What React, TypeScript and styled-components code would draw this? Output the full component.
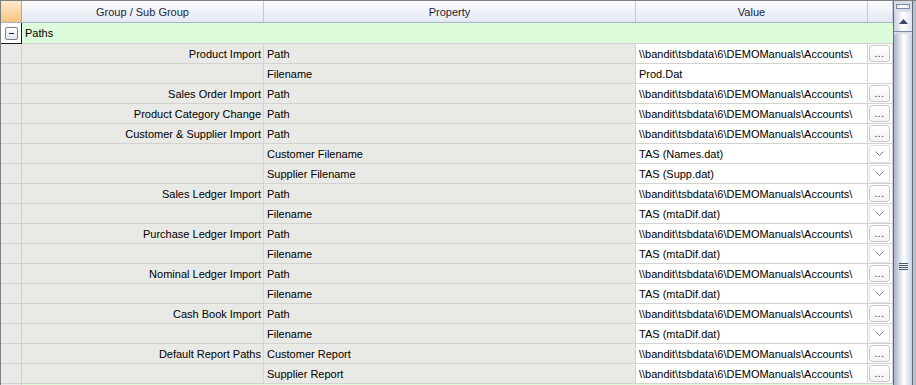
import React from 'react';
import styled, { createGlobalStyle } from 'styled-components';

const GlobalStyle = createGlobalStyle`
  html, body {
    margin: 0;
    padding: 0;
    overflow: hidden;
    background: #ffffff;
  }
  body {
    font-family: "Liberation Sans", Arial, sans-serif;
    font-size: 11px;
    color: #000;
  }
`;

const COLS = '21px 242px 372px 232px 25px';

const Frame = styled.div`
  width: 916px;
  height: 385px;
  box-sizing: border-box;
  border-top: 1px solid #7f7f7f;
  border-left: 1px solid #7f7f7f;
  display: flex;
  flex-direction: row;
  overflow: hidden;
`;

const Grid = styled.div`
  width: 892px;
  display: flex;
  flex-direction: column;
  overflow: hidden;
`;

const HeaderRow = styled.div`
  display: grid;
  grid-template-columns: ${COLS};
  height: 22px;
  flex-shrink: 0;
  box-sizing: border-box;
  border-bottom: 1px solid #a6b2c8;
`;

const Corner = styled.div`
  background: linear-gradient(#fdebd0, #f6c47e);
  border-right: 1px solid #e0a050;
`;

const HeadCell = styled.div`
  background: linear-gradient(#fbfcfe, #e3e8f1);
  border-right: 1px solid #c3cbdb;
  display: flex;
  align-items: center;
  justify-content: center;
  color: #1d1d3a;
  font-size: 11px;
`;

const Row = styled.div<{ $first?: boolean; $green?: boolean }>`
  display: grid;
  grid-template-columns: ${COLS};
  height: ${(p) => (p.$first ? '21px' : '20px')};
  flex-shrink: 0;
  box-sizing: border-box;
  border-bottom: 1px solid #d2d2d0;
  background: ${(p) => (p.$green ? '#ddfcdc' : '#e9e9e5')};
`;

const Indicator = styled.div<{ $focus?: boolean }>`
  box-sizing: border-box;
  border-right: 1px solid ${(p) => (p.$focus ? '#1a1a1a' : '#d2d2d0')};
  ${(p) => p.$focus && 'box-shadow: 0 1px 0 #1a1a1a;'}
  background: #e9e9e5;
  display: flex;
  align-items: center;
  justify-content: center;
`;

const GreenIndicator = styled(Indicator)`
  background: #ffffff;
`;

const Cell = styled.div<{ $align?: 'left' | 'right'; $bg?: string }>`
  box-sizing: border-box;
  border-right: 1px solid #d2d2d0;
  display: flex;
  align-items: center;
  justify-content: ${(p) => (p.$align === 'right' ? 'flex-end' : 'flex-start')};
  padding: 0 2px 0 3px;
  white-space: nowrap;
  overflow: hidden;
  background: ${(p) => p.$bg || 'transparent'};
`;

const GroupTitle = styled.div`
  grid-column: 2 / span 4;
  display: flex;
  align-items: center;
  padding-left: 3px;
`;

const Expander = styled.div`
  width: 13px;
  height: 13px;
  box-sizing: border-box;
  border: 1px solid #7a7f8a;
  border-radius: 2px;
  background: linear-gradient(#ffffff, #dfe3ea);
  position: relative;
  &::after {
    content: '';
    position: absolute;
    left: 3px;
    top: 5px;
    width: 5px;
    height: 1px;
    background: #202020;
  }
`;

const EditorCell = styled.div`
  display: flex;
  align-items: center;
  justify-content: flex-start;
  padding-left: 1px;
  background: #ffffff;
  border-right: 1px solid #d2d2d0;
`;

const DotsButton = styled.div`
  width: 21px;
  height: 17px;
  box-sizing: border-box;
  border: 1px solid #c9c9c9;
  border-radius: 3px;
  background: linear-gradient(#ffffff, #f3f3f3);
  display: flex;
  align-items: flex-end;
  justify-content: center;
  font-size: 10px;
  line-height: 10px;
  padding-bottom: 2px;
  color: #2a1a4a;
  letter-spacing: 0.5px;
`;

const ComboButton = styled.div`
  width: 21px;
  height: 18px;
  box-sizing: border-box;
  border: 1px solid #dedede;
  border-radius: 2px;
  background: #ffffff;
  display: flex;
  align-items: center;
  justify-content: center;
`;

const ScrollBar = styled.div`
  width: 20px;
  flex-shrink: 0;
  box-sizing: border-box;
  border-left: 1px solid #5c6c8c;
  border-right: 1px solid #5c6c8c;
  background: #d8dde8;
  display: flex;
  flex-direction: column;
  align-items: stretch;
  padding-top: 3px;
`;

const Splitter = styled.div`
  height: 5px;
  margin: 0 2px;
  box-sizing: border-box;
  border: 1px solid #7d8bab;
  background: linear-gradient(90deg, #e4e8f2, #ffffff, #e4e8f2);
`;

const ArrowButton = styled.div`
  height: 20px;
  margin-top: 3px;
  box-sizing: border-box;
  border-bottom: 1px solid #7d8bab;
  background: linear-gradient(90deg, #c6cedf, #ffffff 50%, #dfe4ee);
  display: flex;
  align-items: center;
  justify-content: center;
`;

const Thumb = styled.div`
  flex: 1;
  margin-top: 2px;
  border-radius: 3px 3px 0 0;
  background: linear-gradient(90deg, #a9b4cb, #eef1f7 45%, #ffffff 55%, #c9d1e2);
  display: flex;
  align-items: flex-start;
  justify-content: center;
  padding-top: 229px;
`;

const Grip = styled.div`
  width: 9px;
  height: 7px;
  background: repeating-linear-gradient(#4a5670 0 1px, transparent 1px 2px);
`;

const RightEdge = styled.div`
  width: 3px;
  flex-shrink: 0;
  background: #bfbfbf;
`;

type Kind = 'button' | 'combo' | 'none';

interface PropRow {
  group: string;
  prop: string;
  value: string;
  kind: Kind;
}

const ACC = '\\\\bandit\\tsbdata\\6\\DEMOManuals\\Accounts\\';

const rows: PropRow[] = [
  { group: 'Product Import', prop: 'Path', value: ACC, kind: 'button' },
  { group: '', prop: 'Filename', value: 'Prod.Dat', kind: 'none' },
  { group: 'Sales Order Import', prop: 'Path', value: ACC, kind: 'button' },
  { group: 'Product Category Change', prop: 'Path', value: ACC, kind: 'button' },
  { group: 'Customer & Supplier Import', prop: 'Path', value: ACC, kind: 'button' },
  { group: '', prop: 'Customer Filename', value: 'TAS (Names.dat)', kind: 'combo' },
  { group: '', prop: 'Supplier Filename', value: 'TAS (Supp.dat)', kind: 'combo' },
  { group: 'Sales Ledger Import', prop: 'Path', value: ACC, kind: 'button' },
  { group: '', prop: 'Filename', value: 'TAS (mtaDif.dat)', kind: 'combo' },
  { group: 'Purchase Ledger Import', prop: 'Path', value: ACC, kind: 'button' },
  { group: '', prop: 'Filename', value: 'TAS (mtaDif.dat)', kind: 'combo' },
  { group: 'Nominal Ledger Import', prop: 'Path', value: ACC, kind: 'button' },
  { group: '', prop: 'Filename', value: 'TAS (mtaDif.dat)', kind: 'combo' },
  { group: 'Cash Book Import', prop: 'Path', value: ACC, kind: 'button' },
  { group: '', prop: 'Filename', value: 'TAS (mtaDif.dat)', kind: 'combo' },
  { group: 'Default Report Paths', prop: 'Customer Report', value: ACC, kind: 'button' },
  { group: '', prop: 'Supplier Report', value: ACC, kind: 'button' },
];

const Chevron = () => (
  <svg width="9" height="5" viewBox="0 0 9 5">
    <path d="M0.5 0.5 L4.5 4.5 L8.5 0.5" fill="none" stroke="#7a7a7a" strokeWidth="1" />
  </svg>
);

const UpArrow = () => (
  <svg width="9" height="5" viewBox="0 0 9 5">
    <path d="M0 5 L4.5 0 L9 5 Z" fill="#3c4862" />
  </svg>
);

const Editor = ({ kind }: { kind: Kind }) => (
  <EditorCell>
    {kind === 'button' && <DotsButton>...</DotsButton>}
    {kind === 'combo' && (
      <ComboButton>
        <Chevron />
      </ComboButton>
    )}
  </EditorCell>
);

const App = () => {
  return (
    <>
      <GlobalStyle />
      <Frame>
        <Grid>
          <HeaderRow>
            <Corner />
            <HeadCell>Group / Sub Group</HeadCell>
            <HeadCell>Property</HeadCell>
            <HeadCell>Value</HeadCell>
            <HeadCell />
          </HeaderRow>
          <Row $first $green>
            <GreenIndicator $focus>
              <Expander />
            </GreenIndicator>
            <GroupTitle>Paths</GroupTitle>
          </Row>
          {rows.map((r, i) => (
            <Row key={i}>
              <Indicator />
              <Cell $align="right">{r.group}</Cell>
              <Cell>{r.prop}</Cell>
              <Cell $bg="#ffffff">{r.value}</Cell>
              <Editor kind={r.kind} />
            </Row>
          ))}
          <Row $green>
            <Indicator />
          </Row>
        </Grid>
        <ScrollBar>
          <Splitter />
          <ArrowButton>
            <UpArrow />
          </ArrowButton>
          <Thumb>
            <Grip />
          </Thumb>
        </ScrollBar>
        <RightEdge />
      </Frame>
    </>
  );
};

export default App;
